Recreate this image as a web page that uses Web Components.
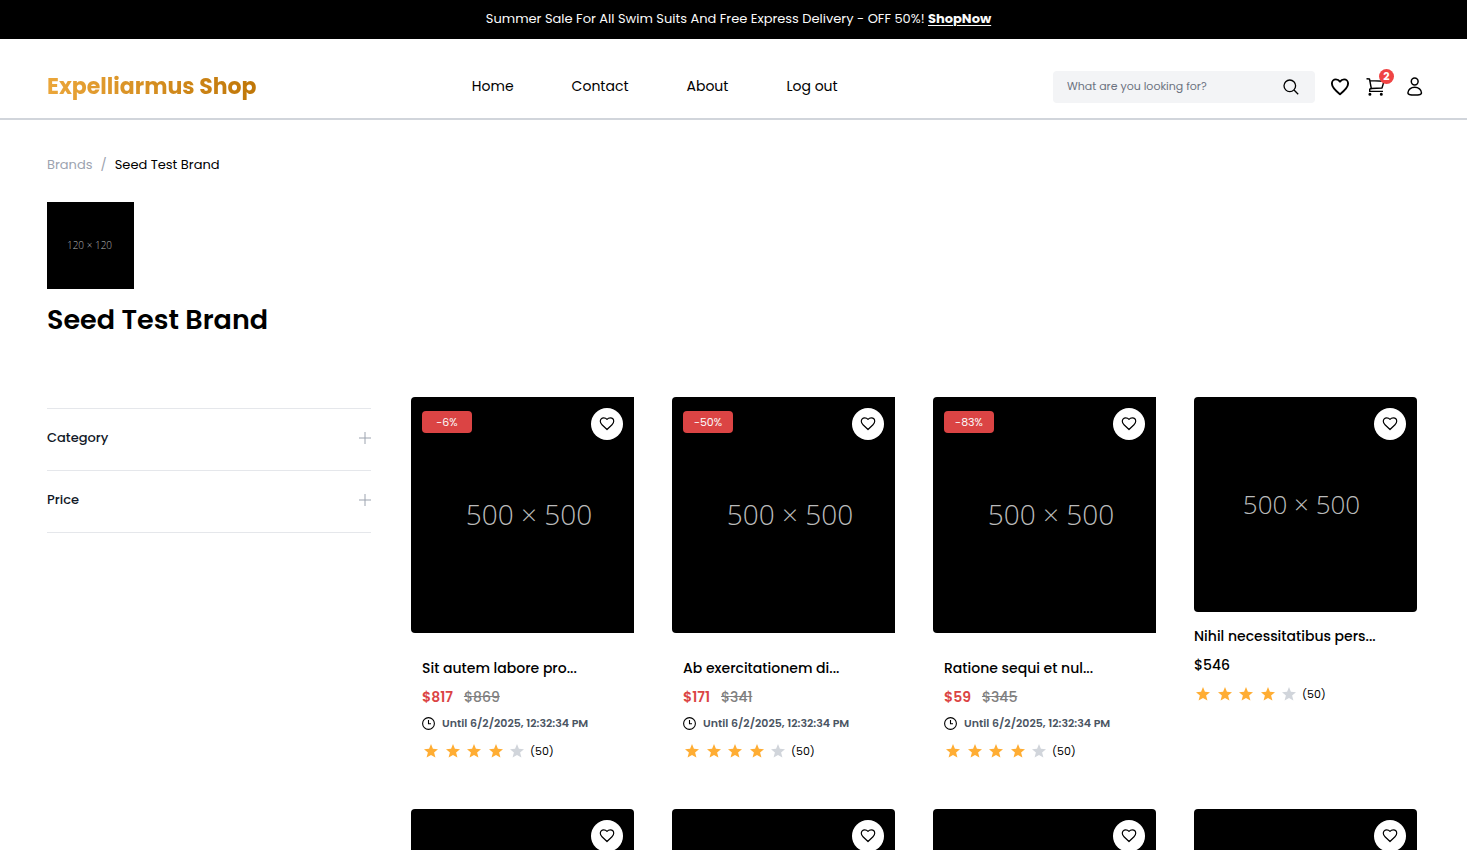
<!DOCTYPE html>
<html lang="en">
<head>
<meta charset="utf-8">
<meta name="viewport" content="width=device-width, initial-scale=1">
<title>Seed Test Brand - Expelliarmus Shop</title>
<style>
  body { margin: 0; background: #fff; color: #000; font-family: Poppins, Inter, "Open Sans", sans-serif; }
</style>
</head>
<body>
<shop-page></shop-page>

<template id="t-page">
  <style>
    :host { display: block; }
    main { padding: 33px 50px 48px 47px; }
    .columns { display: grid; grid-template-columns: 324px minmax(0, 1fr); gap: 40px; margin-top: 58px; }
    .filters { margin-top: 11px; border-top: 1px solid #e5e7eb; }
    .products { display: grid; grid-template-columns: repeat(4, minmax(0, 1fr)); gap: 47px 38px; }
  </style>
  <promo-bar></promo-bar>
  <shop-header></shop-header>
  <main>
    <bread-crumbs></bread-crumbs>
    <brand-intro name="Seed Test Brand"></brand-intro>
    <div class="columns">
      <aside class="filters">
        <filter-row>Category</filter-row>
        <filter-row>Price</filter-row>
      </aside>
      <section class="products">
        <product-card name="Sit autem labore pro..." price="$817" old="$869" off="-6%"></product-card>
        <product-card name="Ab exercitationem di..." price="$171" old="$341" off="-50%"></product-card>
        <product-card name="Ratione sequi et nul..." price="$59" old="$345" off="-83%"></product-card>
        <product-card name="Nihil necessitatibus pers..." price="$546"></product-card>
        <product-card></product-card>
        <product-card></product-card>
        <product-card></product-card>
        <product-card></product-card>
      </section>
    </div>
  </main>
</template>

<template id="t-promo">
  <style>
    :host { display: flex; justify-content: center; align-items: center; box-sizing: border-box; height: 39px; padding-left: 10px; padding-bottom: 2px; background: #000; color: #fafafa; font-size: 13px; line-height: 20px; }
    p { margin: 0; }
    a { color: inherit; font-weight: 700; text-underline-offset: 2px; }
  </style>
  <p>Summer Sale For All Swim Suits And Free Express Delivery - OFF 50%! <a href="#shop">ShopNow</a></p>
</template>

<template id="t-header">
  <style>
    :host { display: flex; justify-content: space-between; align-items: center; padding: 32px 40px 15px 47px; border-bottom: 2px solid #d1d5db; }
    a { color: inherit; text-decoration: none; }
    .logo { font-size: 22px; line-height: 32px; font-weight: 700; color: transparent; background: linear-gradient(90deg, #eba63a, #bf7607); -webkit-background-clip: text; background-clip: text; }
    nav { display: flex; gap: 58px; padding-bottom: 2px; font-size: 14px; line-height: 24px; }
    .tools { display: flex; align-items: center; gap: 14px; }
    form { display: flex; align-items: center; box-sizing: border-box; width: 262px; height: 32px; padding: 0 12px 0 14px; border-radius: 4px; background: #f3f4f6; }
    input { flex: 1; min-width: 0; padding: 0 0 2px; border: 0; outline: 0; background: none; font: inherit; font-size: 11px; line-height: 16px; color: #000; }
    input::placeholder { color: #6b7280; opacity: 1; }
    button { display: flex; padding: 0; border: 0; background: none; color: inherit; cursor: pointer; }
    svg { display: block; fill: none; stroke: currentColor; }
    .cart { position: relative; }
    .count { position: absolute; top: -6px; right: -5px; width: 15px; height: 15px; border-radius: 50%; background: #ef4444; color: #fff; font-size: 11px; line-height: 15px; font-weight: 700; text-align: center; }
  </style>
  <a class="logo" href="#home">Expelliarmus Shop</a>
  <nav>
    <a href="#home">Home</a>
    <a href="#contact">Contact</a>
    <a href="#about">About</a>
    <a href="#logout">Log out</a>
  </nav>
  <div class="tools">
    <form role="search">
      <input type="text" aria-label="Search products" placeholder="What are you looking for?">
      <button type="button" aria-label="Search">
        <svg width="24" height="24" viewBox="0 0 24 24" stroke-width="1.3"><circle cx="10.8" cy="10.8" r="5.8"/><path d="M15 15l4.2 4.2"/></svg>
      </button>
    </form>
    <a href="#wishlist" aria-label="Wishlist">
      <svg width="22" height="24" viewBox="0 0 22 24" stroke-width="1.9" stroke-linejoin="round"><path d="M6.900 4.400C4.600 4.400 2.900 6.200 2.900 8.600C2.900 13 7.300 16.300 11 19.200C14.700 16.300 19.100 13 19.100 8.600C19.100 6.200 17.400 4.400 15.100 4.400C13.300 4.400 11.900 5.300 11 6.600C10.100 5.300 8.700 4.400 6.900 4.400Z"/></svg>
    </a>
    <a class="cart" href="#cart" aria-label="Cart">
      <svg width="24" height="24" viewBox="0 0 24 24" stroke-width="1.400" stroke-linejoin="round"><path d="M1.500 3.800L4.500 4L6.300 13.500L17 13L19 6.200L5 5.600"/><path d="M6.300 13.500L4.700 14.200V16.400H18"/><circle cx="4.900" cy="19.200" r=".8" fill="currentColor"/><circle cx="16.300" cy="19.200" r=".8" fill="currentColor"/></svg>
      <span class="count">2</span>
    </a>
    <a href="#account" aria-label="Account">
      <svg width="24" height="24" viewBox="0 0 24 24" stroke-width="1.500"><circle cx="11.700" cy="6.500" r="3.400"/><path d="M4.900 18C4.900 14.600 8 12.200 11.700 12.200S18.500 14.600 18.500 18C18.500 19.700 15.200 20.100 11.700 20.100S4.900 19.700 4.900 18Z"/></svg>
    </a>
  </div>
</template>

<template id="t-crumbs">
  <style>
    nav { display: flex; gap: 8px; font-size: 13px; line-height: 24px; color: #9ca3af; }
    :host { display: block; }
    a { color: inherit; text-decoration: none; }
    .here { color: #000; }
  </style>
  <nav aria-label="Breadcrumb"><a href="#brands">Brands</a><span>/</span><a class="here" href="#brand">Seed Test Brand</a></nav>
</template>

<template id="t-intro">
  <style>
    :host { display: block; margin-top: 25px; }
    .mark { display: grid; place-items: center; box-sizing: border-box; width: 87px; height: 87px; padding: 0 2px 2px 0; background: #000; color: #b4b4b4; font: 300 10px/16px "Open Sans", sans-serif; }
    h1 { margin: 12px 0 0; font-size: 27px; line-height: 38px; font-weight: 600; }
  </style>
  <div class="mark">120 × 120</div>
  <h1></h1>
</template>

<template id="t-filter">
  <style>
    :host { display: block; border-bottom: 1px solid #e5e7eb; }
    button { display: flex; justify-content: space-between; align-items: center; width: 100%; height: 61px; padding: 0 0 3px; border: 0; background: none; font: inherit; font-size: 13px; line-height: 20px; font-weight: 500; color: #111827; cursor: pointer; }
    svg { display: block; stroke: #9ca3af; }
  </style>
  <button type="button"><slot></slot><svg width="12" height="12" viewBox="0 0 12 12" aria-hidden="true"><path d="M0 6H12M6 0V12"/></svg></button>
</template>

<template id="t-card">
  <style>
    :host { display: block; font-size: 14px; line-height: 22px; font-weight: 500; }
    .picture { position: relative; overflow: hidden; height: 215px; border-radius: 4px; background: #000; }
    .size { display: grid; place-items: center; box-sizing: border-box; width: 215px; height: 215px; padding-bottom: 2px; color: #bbb; font: 300 26px/36px "Open Sans", sans-serif; }
    .off { position: absolute; top: 14px; left: 11px; width: 50px; height: 22px; border-radius: 4px; background: #db4444; color: #fafafa; font-size: 11px; font-weight: 400; text-align: center; }
    .like { position: absolute; top: 11px; right: 11px; display: grid; place-items: center; width: 32px; height: 32px; padding: 0; border: 0; border-radius: 50%; background: #fff; color: #000; cursor: pointer; }
    svg { display: block; }
    .info { display: flex; flex-direction: column; gap: 7px; padding-top: 13px; }
    h3 { margin: 0; font: inherit; white-space: nowrap; }
    .prices { display: flex; gap: 11px; }
    .now { margin: 0; }
    s, .until { display: none; }
    .rating { display: flex; align-items: center; font-size: 11px; font-weight: 400; }
    .stars { display: flex; justify-content: space-between; width: 100px; padding: 0 6px 0 2px; }
    .star { fill: #ffad33; }
    .star:last-child { fill: #d1d5db; }
    :host([off]) .picture { height: 236px; border-radius: 4px 0 0 4px; }
    :host([off]) .size { width: 236px; height: 236px; font-size: 28px; }
    :host([off]) .info { padding: 24px 0 0 11px; }
    :host([off]) .now { color: #db4444; font-weight: 600; }
    :host([off]) s { display: block; color: #808080; }
    :host([off]) .until { display: flex; align-items: center; gap: 7px; height: 16px; padding-bottom: 2px; color: #4b5563; font-size: 11px; line-height: 16px; font-weight: 600; white-space: nowrap; }
    .until svg { fill: none; stroke: #000; }
  </style>
  <div class="picture">
    <div class="size">500 × 500</div>
    <span class="off"></span>
    <button class="like" type="button" aria-label="Add to wishlist">
      <svg width="16" height="16" viewBox="0 0 16 16" fill="none" stroke="#000" stroke-width="1.200" stroke-linejoin="round"><path d="M4.700 1.900C2.600 1.900 1.300 3.400 1.300 5.300C1.300 6.700 1.900 7.700 3 8.700L8 13.500L13 8.700C14.100 7.700 14.700 6.700 14.700 5.300C14.700 3.400 13.400 1.900 11.300 1.900C9.800 1.900 8.700 2.500 8 3.300C7.300 2.500 6.200 1.900 4.700 1.900Z"/></svg>
    </button>
  </div>
  <div class="info">
    <h3></h3>
    <div class="prices"><p class="now"></p><s></s></div>
    <div class="until"><svg width="13" height="13" viewBox="0 0 13 13" stroke-width="1.100"><circle cx="6.500" cy="6.500" r="5.900"/><path d="M6.500 3V6.800H9"/></svg><span>Until 6/2/2025, 12:32:34 PM</span></div>
    <div class="rating"><span class="stars"></span><span>(50)</span></div>
  </div>
</template>

<script>
  const stamp = (host, id) => {
    const root = host.attachShadow({ mode: "open" });
    root.append(document.getElementById(id).content.cloneNode(true));
    return root;
  };

  class PromoBar extends HTMLElement { constructor() { super(); stamp(this, "t-promo"); } }
  class ShopHeader extends HTMLElement { constructor() { super(); stamp(this, "t-header"); } }
  class BreadCrumbs extends HTMLElement { constructor() { super(); stamp(this, "t-crumbs"); } }
  class FilterRow extends HTMLElement { constructor() { super(); stamp(this, "t-filter"); } }
  class ShopPage extends HTMLElement { constructor() { super(); stamp(this, "t-page"); } }

  class BrandIntro extends HTMLElement {
    constructor() { super(); stamp(this, "t-intro"); }
    connectedCallback() { this.shadowRoot.querySelector("h1").textContent = this.getAttribute("name"); }
  }

  const STAR = '<svg class="star" width="14" height="14" viewBox="0 0 14 14" aria-hidden="true"><path d="M7 0L8.900 4.700L14 5.200L10.100 8.500L11.400 13.600L7 10.900L2.600 13.600L3.900 8.500L0 5.200L5.100 4.700Z"/></svg>';

  class ProductCard extends HTMLElement {
    constructor() { super(); stamp(this, "t-card"); }
    connectedCallback() {
      const root = this.shadowRoot;
      const find = (selector) => root.querySelector(selector);
      if (!this.hasAttribute("off")) {
        find(".off").remove();
        find(".until").remove();
        find("s").remove();
      } else {
        find(".off").textContent = this.getAttribute("off");
        find("s").textContent = this.getAttribute("old");
      }
      if (!this.hasAttribute("name")) {
        find(".info").remove();
        find(".size").remove();
        return;
      }
      find("h3").textContent = this.getAttribute("name");
      find(".now").textContent = this.getAttribute("price");
      find(".stars").innerHTML = STAR.repeat(5);
    }
  }

  customElements.define("promo-bar", PromoBar);
  customElements.define("shop-header", ShopHeader);
  customElements.define("bread-crumbs", BreadCrumbs);
  customElements.define("brand-intro", BrandIntro);
  customElements.define("filter-row", FilterRow);
  customElements.define("product-card", ProductCard);
  customElements.define("shop-page", ShopPage);
</script>
</body>
</html>
